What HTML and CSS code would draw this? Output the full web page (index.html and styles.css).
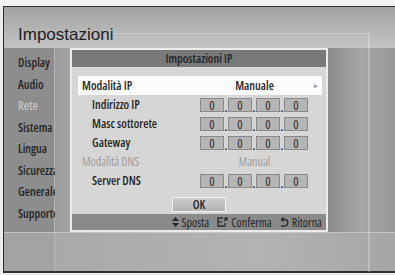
FILE: index.html
```html
<!DOCTYPE html>
<html lang="it">
<head>
    <meta charset="UTF-8">
    <meta name="viewport" content="width=device-width, initial-scale=1.0">
    <title>Impostazioni</title>
    <link rel="stylesheet" href="styles.css">
</head>
<body>
    <div class="top-strip"></div>
    <div class="screen">
        <!-- Title -->
        <header class="screen-title">
            <h1>Impostazioni</h1>
        </header>

        <div class="screen-main">
            <!-- Left menu -->
            <ul class="side-menu">
                <li>Display</li>
                <li>Audio</li>
                <li class="dim">Rete</li>
                <li>Sistema</li>
                <li>Lingua</li>
                <li>Sicurezza</li>
                <li>Generale</li>
                <li>Supporto</li>
            </ul>
            <div class="gutter"></div>

            <!-- IP dialog -->
            <div class="dialog">
                <div class="dialog-head">Impostazioni IP</div>
                <div class="dialog-body">
                    <div class="row row-select">
                        <span class="label">Modalità IP</span>
                        <span class="value">Manuale</span>
                        <span class="arrow">&#9656;</span>
                    </div>
                    <div class="row sub">
                        <span class="label">Indirizzo IP</span>
                        <div class="ip">
                            <span class="box">0</span><span class="dot">.</span><span class="box">0</span><span class="dot">.</span><span class="box">0</span><span class="dot">.</span><span class="box">0</span>
                        </div>
                    </div>
                    <div class="row sub">
                        <span class="label">Masc sottorete</span>
                        <div class="ip">
                            <span class="box">0</span><span class="dot">.</span><span class="box">0</span><span class="dot">.</span><span class="box">0</span><span class="dot">.</span><span class="box">0</span>
                        </div>
                    </div>
                    <div class="row sub">
                        <span class="label">Gateway</span>
                        <div class="ip">
                            <span class="box">0</span><span class="dot">.</span><span class="box">0</span><span class="dot">.</span><span class="box">0</span><span class="dot">.</span><span class="box">0</span>
                        </div>
                    </div>
                    <div class="row dim">
                        <span class="label">Modalità DNS</span>
                        <span class="value">Manual</span>
                    </div>
                    <div class="row sub">
                        <span class="label">Server DNS</span>
                        <div class="ip">
                            <span class="box">0</span><span class="dot">.</span><span class="box">0</span><span class="dot">.</span><span class="box">0</span><span class="dot">.</span><span class="box">0</span>
                        </div>
                    </div>
                </div>
                <div class="ok-wrap">
                    <button class="ok-btn">OK</button>
                </div>
                <div class="legend">
                    <span class="hint">
                        <svg width="7" height="10" viewBox="0 0 7 10"><path d="M3.5 0 L7 4 L0 4 Z M0 6 L7 6 L3.5 10 Z" fill="#2a2a2a"/></svg>
                        Sposta
                    </span>
                    <span class="hint">
                        <svg width="11" height="10" viewBox="0 0 11 10" fill="none" stroke="#2a2a2a" stroke-width="1.3"><path d="M6 1 H1 V9 H8 V6"/><path d="M1 5 H5"/><path d="M7 4 L10 1 M7.5 1 H10 V3.5"/></svg>
                        Conferma
                    </span>
                    <span class="hint">
                        <svg width="9" height="10" viewBox="0 0 9 10" fill="none" stroke="#2a2a2a" stroke-width="1.4"><path d="M2 2.5 H4.5 A3.2 3.2 0 0 1 4.5 9 H1"/><path d="M3.5 0.5 L1.5 2.5 L3.5 4.5"/></svg>
                        Ritorna
                    </span>
                </div>
            </div>
            <div class="right-fill"></div>
        </div>

        <div class="screen-foot">
            <div class="foot-left"></div>
            <div class="foot-right"></div>
        </div>
    </div>
</body>
</html>
```

FILE: styles.css
```css
:root {
    --text-dark: #262626;
    --text-dim: #9d9d9d;
    --frame: #2e2e2e;
    --line-light: rgba(255, 255, 255, 0.25);
}

* {
    margin: 0;
    padding: 0;
    box-sizing: border-box;
}

body {
    width: 395px;
    height: 275px;
    overflow: hidden;
    background: #ececec;
    font-family: 'Open Sans', 'Liberation Sans', sans-serif;
    font-stretch: 79%;
    color: var(--text-dark);
}

.top-strip {
    height: 6px;
    background: #f3f3f3;
}

.screen {
    position: relative;
    margin-left: 3px;
    height: 267px;
    border-top: 1px solid var(--frame);
    border-left: 1px solid var(--frame);
    border-bottom: 2px solid var(--frame);
    display: grid;
    grid-template-rows: 41px 184px 1fr;
}

/* faint decorative frame behind the dialog */
.screen::after {
    content: '';
    position: absolute;
    left: 108px;
    top: 26px;
    width: 257px;
    height: 238px;
    border-top: 1px solid var(--line-light);
    border-right: 1px solid var(--line-light);
    box-shadow: inset -5px 0 0 -4px var(--line-light);
    pointer-events: none;
}

.screen-title {
    background: linear-gradient(#a2a2a2, #c4c4c4);
    display: flex;
    align-items: flex-end;
    padding: 0 0 3px 14px;
}

.screen-title h1 {
    font-family: 'Liberation Sans', sans-serif;
    font-stretch: normal;
    font-weight: normal;
    font-size: 17px;
    line-height: 20px;
    color: #1e1e1e;
}

.screen-main {
    display: grid;
    grid-template-columns: 51px 15px 258px 1fr;
}

.side-menu {
    list-style: none;
    background: #8d8d8d;
    border-right: 1px solid #b4b4b4;
    padding: 4px 0 0 14px;
    font-weight: 600;
    font-size: 12px;
}

.side-menu li {
    height: 21.5px;
    line-height: 21.5px;
    white-space: nowrap;
}

.side-menu li.dim {
    color: #c6c6c6;
}

.gutter {
    background: linear-gradient(to right, #9c9c9c, #a4a4a4);
}

.dialog {
    position: relative;
    z-index: 1;
    border: 2px solid #ececec;
    background: #d6d6d6;
    display: flex;
    flex-direction: column;
}

.dialog-head {
    height: 17px;
    line-height: 17px;
    background: #797979;
    text-align: center;
    font-size: 12px;
    font-weight: 600;
}

.dialog-body {
    padding: 9px 4px 0 6px;
}

.row {
    height: 19px;
    display: grid;
    grid-template-columns: 122px 109px 1fr;
    align-items: center;
    font-size: 12px;
    font-weight: 600;
}

.row .label {
    padding-left: 4px;
    white-space: nowrap;
}

.row.sub .label {
    padding-left: 14px;
}

.row .value {
    text-align: center;
}

.row-select {
    background: #fbfbfb;
}

.row-select .arrow {
    text-align: right;
    padding-right: 4px;
    font-size: 7px;
    color: #9a9a9a;
}

.row.dim {
    color: var(--text-dim);
    font-weight: normal;
}

.ip {
    display: flex;
    align-items: flex-end;
}

.box {
    width: 24px;
    height: 14px;
    line-height: 13px;
    text-align: center;
    background: #b5b5b5;
    border: 1px solid #8a8a8a;
    font-size: 12.5px;
    font-weight: normal;
    color: #2a2a2a;
}

.dot {
    width: 4px;
    text-align: center;
    font-size: 11px;
    font-weight: bold;
    line-height: 8px;
    color: #222;
}

.ok-wrap {
    display: flex;
    justify-content: center;
    padding-top: 7px;
}

.ok-btn {
    width: 54px;
    height: 15px;
    border: 1px solid #f2f2f2;
    background: linear-gradient(#cdcdcd, #b2b2b2);
    font-family: inherit;
    font-stretch: inherit;
    font-size: 12px;
    font-weight: 600;
    color: var(--text-dark);
    line-height: 13px;
}

.legend {
    margin-top: auto;
    height: 16px;
    background: #8a8a8a;
    display: flex;
    justify-content: flex-end;
    align-items: center;
    gap: 8px;
    padding-right: 4px;
    font-size: 12px;
}

.hint {
    display: flex;
    align-items: center;
    gap: 3px;
}

.right-fill {
    background: linear-gradient(to right, #8c8c8c, #a6a6a6 50%, #979797);
}

.screen-foot {
    display: grid;
    grid-template-columns: 51px 1fr;
    border-top: 1px solid #c4c4c4;
}

.foot-left {
    background: #a3a3a3;
    border-right: 1px solid #bcbcbc;
}

.foot-right {
    background: linear-gradient(to right, #a9a9a9, #b3b3b3 60%, #a6a6a6);
}
```
